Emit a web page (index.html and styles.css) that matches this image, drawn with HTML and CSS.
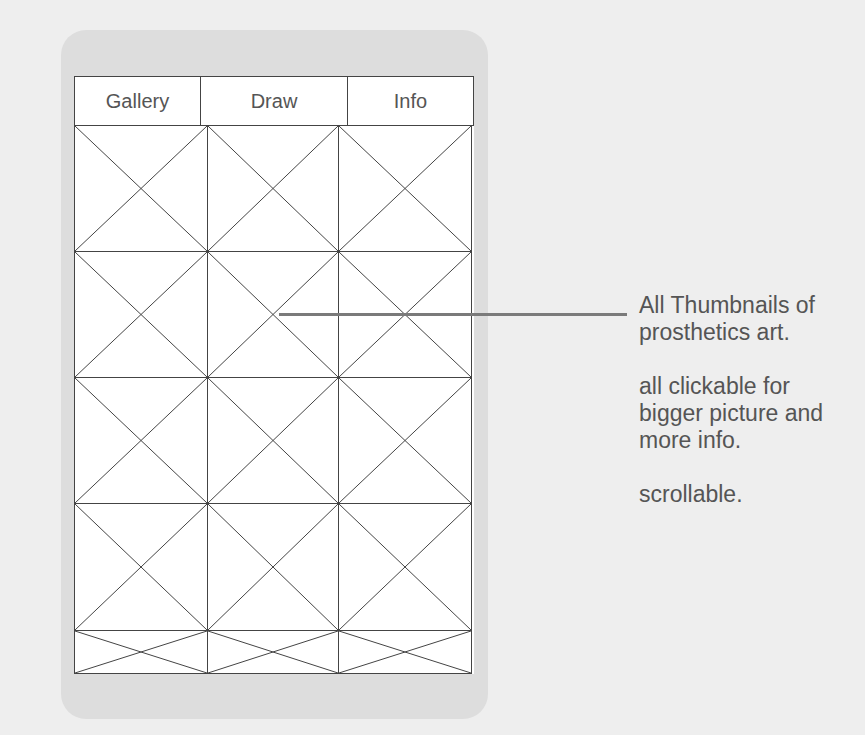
FILE: index.html
```html
<!DOCTYPE html>
<html>
<head>
<meta charset="utf-8">
<link rel="stylesheet" href="styles.css">
</head>
<body>
<div class="phone">
  <div class="screen">
    <div class="tabs">
      <div class="tab">Gallery</div>
      <div class="tab">Draw</div>
      <div class="tab">Info</div>
    </div>
    <div class="grid">
      <div class="cell"><svg viewBox="0 0 100 100" preserveAspectRatio="none"><line x1="0" y1="0" x2="100" y2="100"/><line x1="100" y1="0" x2="0" y2="100"/></svg></div>
      <div class="cell"><svg viewBox="0 0 100 100" preserveAspectRatio="none"><line x1="0" y1="0" x2="100" y2="100"/><line x1="100" y1="0" x2="0" y2="100"/></svg></div>
      <div class="cell"><svg viewBox="0 0 100 100" preserveAspectRatio="none"><line x1="0" y1="0" x2="100" y2="100"/><line x1="100" y1="0" x2="0" y2="100"/></svg></div>
      <div class="cell"><svg viewBox="0 0 100 100" preserveAspectRatio="none"><line x1="0" y1="0" x2="100" y2="100"/><line x1="100" y1="0" x2="0" y2="100"/></svg></div>
      <div class="cell"><svg viewBox="0 0 100 100" preserveAspectRatio="none"><line x1="0" y1="0" x2="100" y2="100"/><line x1="100" y1="0" x2="0" y2="100"/></svg></div>
      <div class="cell"><svg viewBox="0 0 100 100" preserveAspectRatio="none"><line x1="0" y1="0" x2="100" y2="100"/><line x1="100" y1="0" x2="0" y2="100"/></svg></div>
      <div class="cell"><svg viewBox="0 0 100 100" preserveAspectRatio="none"><line x1="0" y1="0" x2="100" y2="100"/><line x1="100" y1="0" x2="0" y2="100"/></svg></div>
      <div class="cell"><svg viewBox="0 0 100 100" preserveAspectRatio="none"><line x1="0" y1="0" x2="100" y2="100"/><line x1="100" y1="0" x2="0" y2="100"/></svg></div>
      <div class="cell"><svg viewBox="0 0 100 100" preserveAspectRatio="none"><line x1="0" y1="0" x2="100" y2="100"/><line x1="100" y1="0" x2="0" y2="100"/></svg></div>
      <div class="cell"><svg viewBox="0 0 100 100" preserveAspectRatio="none"><line x1="0" y1="0" x2="100" y2="100"/><line x1="100" y1="0" x2="0" y2="100"/></svg></div>
      <div class="cell"><svg viewBox="0 0 100 100" preserveAspectRatio="none"><line x1="0" y1="0" x2="100" y2="100"/><line x1="100" y1="0" x2="0" y2="100"/></svg></div>
      <div class="cell"><svg viewBox="0 0 100 100" preserveAspectRatio="none"><line x1="0" y1="0" x2="100" y2="100"/><line x1="100" y1="0" x2="0" y2="100"/></svg></div>
      <div class="cell"><svg viewBox="0 0 100 100" preserveAspectRatio="none"><line x1="0" y1="0" x2="100" y2="100"/><line x1="100" y1="0" x2="0" y2="100"/></svg></div>
      <div class="cell"><svg viewBox="0 0 100 100" preserveAspectRatio="none"><line x1="0" y1="0" x2="100" y2="100"/><line x1="100" y1="0" x2="0" y2="100"/></svg></div>
      <div class="cell"><svg viewBox="0 0 100 100" preserveAspectRatio="none"><line x1="0" y1="0" x2="100" y2="100"/><line x1="100" y1="0" x2="0" y2="100"/></svg></div>
    </div>
  </div>
</div>
<div class="note">
  <p>All Thumbnails of<br>prosthetics art.</p>
  <p>all clickable for<br>bigger picture and<br>more info.</p>
  <p>scrollable.</p>
</div>
<div class="pointer"></div>
</body>
</html>
```
FILE: styles.css
```css
html, body {
  margin: 0;
  padding: 0;
}
body {
  background: #eeeeee;
  width: 865px;
  height: 735px;
  display: flex;
  align-items: flex-start;
  font-family: "Liberation Sans", Arial, sans-serif;
  position: relative;
  overflow: hidden;
}
.phone {
  margin: 30px 0 0 61px;
  width: 427px;
  height: 689px;
  box-sizing: border-box;
  background: #dddddd;
  border-radius: 25px;
  padding: 46px 0 0 13px;
}
.screen {
  width: 400px;
  background: #ffffff;
}
.tabs {
  display: grid;
  grid-template-columns: 125px 147px 126px;
  height: 50px;
  box-sizing: border-box;
  border: 1px solid #444444;
  border-bottom: none;
}
.tab {
  display: flex;
  align-items: center;
  justify-content: center;
  font-size: 20px;
  color: #555555;
  border-bottom: 1px solid #444444;
}
.tab + .tab {
  border-left: 1px solid #444444;
}
.grid {
  display: grid;
  grid-template-columns: 133px 131px 133px;
  grid-template-rows: 126px 126px 126px 127px 43px;
  width: 398px;
  border-left: 1px solid #444444;
  box-sizing: border-box;
}
.cell {
  border-right: 1px solid #444444;
  border-bottom: 1px solid #444444;
  box-sizing: border-box;
  min-height: 0;
}
.cell svg {
  display: block;
  width: 100%;
  height: 100%;
}
.cell line {
  stroke: #444444;
  stroke-width: 1;
  vector-effect: non-scaling-stroke;
}
.note {
  margin: 292px 0 0 151px;
  font-size: 23px;
  line-height: 27px;
  color: #555555;
  white-space: nowrap;
}
.note p {
  margin: 0 0 27px 0;
}
.pointer {
  position: absolute;
  left: 279px;
  top: 313px;
  width: 348px;
  height: 3px;
  background: #7a7a7a;
}
```
